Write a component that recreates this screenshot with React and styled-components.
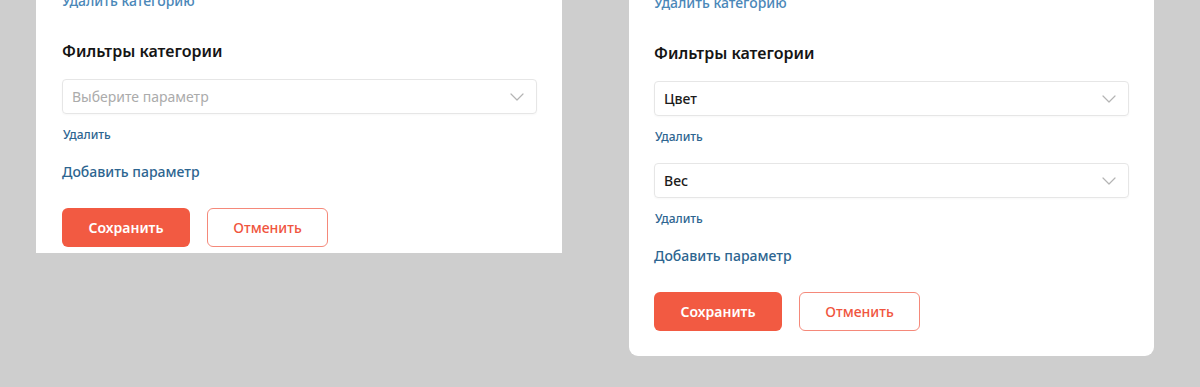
import React from 'react';
import styled, { createGlobalStyle } from 'styled-components';

const GlobalStyle = createGlobalStyle`
  html, body {
    margin: 0;
    padding: 0;
    background: #cecece;
  }

  body {
    font-family: 'Noto Sans', 'Open Sans', sans-serif;
    height: 387px;
    overflow: hidden;
  }
`;

const Chevron = () => (
  <svg width="14" height="8" viewBox="0 0 14 8" fill="none">
    <path d="M1 1l6 6 6-6" stroke="#b4b4b4" strokeWidth="1.2" strokeLinecap="round" strokeLinejoin="round" />
  </svg>
);

const FilterSelect = ({ value, placeholder }) => (
  <SelectBox>
    {value ? <SelectValue>{value}</SelectValue> : <SelectPlaceholder>{placeholder}</SelectPlaceholder>}
    <Chevron />
  </SelectBox>
);

const FilterCard = ({ filters, offset, bottom }) => (
  <Card offset={offset} bottom={bottom}>
    <TopLink>Удалить категорию</TopLink>
    <Heading>Фильтры категории</Heading>
    {filters.map((f, i) => (
      <FilterRow key={i}>
        <FilterSelect value={f} placeholder="Выберите параметр" />
        <RemoveLink>Удалить</RemoveLink>
      </FilterRow>
    ))}
    <AddLink>Добавить параметр</AddLink>
    <Actions>
      <SaveButton>Сохранить</SaveButton>
      <CancelButton>Отменить</CancelButton>
    </Actions>
  </Card>
);

const App = () => (
  <>
    <GlobalStyle />
    <Page>
      <FilterCard filters={['']} offset={-9} bottom={6} />
      <FilterCard filters={['Цвет', 'Вес']} offset={-7} bottom={25} />
    </Page>
  </>
);

export default App;

// STYLES
const Page = styled.div`
  display: flex;
  align-items: flex-start;
  gap: 67px;
  padding-left: 36px;
`;

const Card = styled.div`
  background: #fff;
  width: 526px;
  box-sizing: border-box;
  margin-top: ${({ offset }) => offset}px;
  padding: 0 25px ${({ bottom }) => bottom}px 26px;
  border-radius: ${({ bottom }) => (bottom > 10 ? '0 0 9px 9px' : '0')};
  display: flex;
  flex-direction: column;
  align-items: flex-start;

  & + & {
    width: 525px;
    padding-left: 25px;
  }
`;

const TopLink = styled.a`
  font-size: 14px;
  line-height: 20px;
  font-weight: 500;
  color: #4a87b8;
`;

const Heading = styled.h3`
  margin: 28px 0 0;
  font-size: 16px;
  line-height: 24px;
  font-weight: 600;
  color: #151515;
`;

const FilterRow = styled.div`
  display: flex;
  flex-direction: column;
  align-items: flex-start;
  align-self: stretch;
  margin-top: 16px;

  & + & {
    margin-top: 18px;
  }
`;

const SelectBox = styled.div`
  align-self: stretch;
  height: 35px;
  box-sizing: border-box;
  border: 1px solid #e6e6e6;
  border-radius: 4px;
  box-shadow: 0 1px 2px rgba(0, 0, 0, 0.03);
  padding: 0 12px 0 9px;
  display: flex;
  align-items: center;
  justify-content: space-between;
`;

const SelectValue = styled.span`
  font-size: 14px;
  font-weight: 500;
  color: #1b1b1b;
`;

const SelectPlaceholder = styled.span`
  font-size: 14px;
  color: #ababab;
`;

const RemoveLink = styled.a`
  margin: 13px 0 0 1px;
  font-size: 12px;
  line-height: 16px;
  font-weight: 500;
  color: #2d6590;
`;

const AddLink = styled.a`
  margin-top: 19px;
  font-size: 14px;
  line-height: 20px;
  font-weight: 500;
  color: #2d6590;
`;

const Actions = styled.div`
  display: flex;
  gap: 17px;
  margin-top: 26px;
`;

const BaseButton = styled.button`
  height: 39px;
  box-sizing: border-box;
  border-radius: 6px;
  font-family: inherit;
  font-size: 14px;
  font-weight: 600;
  cursor: pointer;
`;

const SaveButton = styled(BaseButton)`
  width: 128px;
  border: none;
  background: #f25a42;
  color: #fff;
`;

const CancelButton = styled(BaseButton)`
  width: 121px;
  background: #fff;
  border: 1px solid #f5897a;
  color: #f0553e;
  font-weight: 500;
`;
